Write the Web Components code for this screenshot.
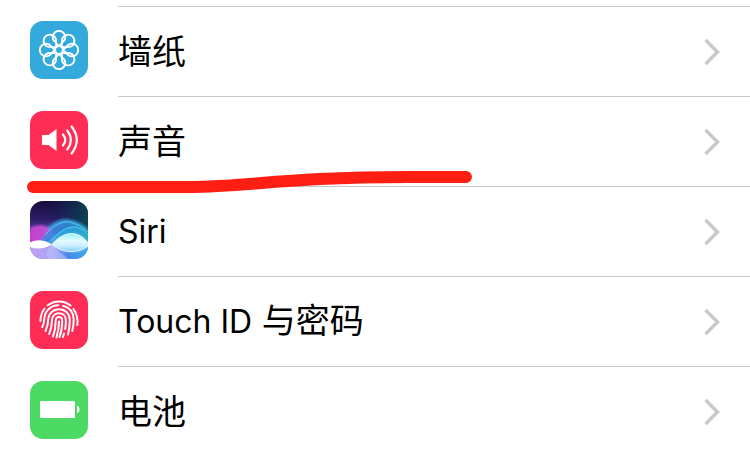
<!DOCTYPE html>
<html lang="zh-CN">
<head>
<meta charset="utf-8">
<meta name="viewport" content="width=device-width, initial-scale=1">
<title>设置</title>
<style>
    body {
        margin: 0;
        background: #fff;
        color: #000;
        font-family: Inter, "Noto Sans CJK SC", sans-serif;
    }
    /* Inter runs larger than the Chinese face at the same size */
    [lang="en"] {
        font-size: 32px;
    }
</style>
</head>
<body>
<settings-list>
    <settings-row href="#wallpaper">
        <app-icon slot="icon" name="wallpaper"></app-icon>墙纸
    </settings-row>
    <settings-row href="#sounds">
        <app-icon slot="icon" name="sounds"></app-icon>声音
    </settings-row>
    <settings-row href="#siri">
        <app-icon slot="icon" name="siri"></app-icon><span lang="en">Siri</span>
    </settings-row>
    <settings-row href="#touch-id">
        <app-icon slot="icon" name="touch"></app-icon><span lang="en">Touch ID</span> 与密码
    </settings-row>
    <settings-row href="#battery">
        <app-icon slot="icon" name="battery"></app-icon>电池
    </settings-row>
    <marker-line slot="marker"></marker-line>
</settings-list>

<script>
const petals = [0, 45, 90, 135, 180, 225, 270, 315]
    .map(a => `<path transform="rotate(${a} 29 29)" d="M29 25L23.500 19.200A6.300 6.300 0 1 1 34.500 19.200Z"/>`)
    .join('');

const icons = {
    wallpaper: `
        <rect width="58" height="58" fill="#34aadc"/>
        <g fill="none" stroke="#fff" stroke-width="1.800" stroke-linejoin="round">
            ${petals}
            <circle cx="29" cy="29" r="3.800"/>
        </g>`,
    sounds: `
        <rect width="58" height="58" fill="#ff2d55"/>
        <path fill="#fff" d="M12 24h6.500L26.500 18v22L18.500 34H12z"/>
        <g fill="none" stroke="#fff" stroke-width="2.200" stroke-linecap="round">
            <path d="M33 23.500Q37.500 29 33 34.500"/>
            <path d="M37.300 19.500Q44.500 29 37.300 38.500"/>
            <path d="M41.600 15.500Q52 29 41.600 42.500"/>
        </g>`,
    siri: `
        <defs>
            <linearGradient id="sky" x2="0" y2="1">
                <stop offset="0" stop-color="#190c3b"/>
                <stop offset=".3" stop-color="#2a1b66"/>
                <stop offset=".5" stop-color="#4a3a9c"/>
                <stop offset="1" stop-color="#7f90e6"/>
            </linearGradient>
            <linearGradient id="teal">
                <stop offset=".3" stop-color="#0a2450" stop-opacity="0"/>
                <stop offset="1" stop-color="#0a4450"/>
            </linearGradient>
            <linearGradient id="pink">
                <stop offset="0" stop-color="#d63cc8"/>
                <stop offset="1" stop-color="#a66df0"/>
            </linearGradient>
            <linearGradient id="blue" x2="1" y2=".6">
                <stop offset="0" stop-color="#6a7cf2"/>
                <stop offset=".5" stop-color="#2a8fdc"/>
                <stop offset="1" stop-color="#17a6a8"/>
            </linearGradient>
            <linearGradient id="wave" x2="0" y2="1">
                <stop offset="0" stop-color="#8ff3f8"/>
                <stop offset=".4" stop-color="#e2fbff"/>
                <stop offset=".65" stop-color="#d3f0ff"/>
                <stop offset="1" stop-color="#7fcfff"/>
            </linearGradient>
            <linearGradient id="floor">
                <stop offset="0" stop-color="#c79bf0"/>
                <stop offset=".4" stop-color="#a3a6f6"/>
                <stop offset=".65" stop-color="#4a86ea"/>
                <stop offset="1" stop-color="#35aee8"/>
            </linearGradient>
            <filter id="glow" x="-20%" y="-40%" width="140%" height="180%">
                <feGaussianBlur stdDeviation="1.800"/>
            </filter>
        </defs>
        <rect width="58" height="58" fill="url(#sky)"/>
        <rect width="58" height="40" fill="url(#teal)"/>
        <path fill="none" stroke="#e04fe0" stroke-width="3" filter="url(#glow)" d="M0 29Q12 22 22 31"/>
        <path fill="none" stroke="#38b8f0" stroke-width="3" filter="url(#glow)" d="M15 32C24 22 32 18 41 21Q50 23 58 30"/>
        <path fill="url(#pink)" opacity=".9" d="M0 30Q11 22 21 30Q28 36 33 43L0 48z"/>
        <path fill="url(#blue)" opacity=".85" d="M8 42C19 31 27 19 40 21C48 22 54 26 58 31V47H8z"/>
        <path fill="#35b5ea" opacity=".55" d="M16 43C26 31 37 25 47 26Q54 28 58 34V46H16z"/>
        <path fill="none" stroke="#5fd0f5" stroke-width=".9" d="M15 34C24 24 31 20 40 21Q50 23 58 31M21 40C30 29 39 25 47 26Q54 28 58 34"/>
        <path fill="url(#floor)" d="M0 43Q12 37 22 43T58 43V58H0z"/>
        <path fill="#c8c4ff" opacity=".5" d="M22 44C29 52 35 54 38 58H18Q14 50 22 44z"/>
        <path fill="#fff" opacity=".7" filter="url(#glow)" d="M22 43.500C34 31 50 30 58 42V45C50 52 34 53 22 43.500z"/>
        <path fill="url(#wave)" d="M22 43.500C29 35.500 36 32.500 42 32.500C49 33 54 37 58 42V45C52 49 47 50.500 41 50.500C34 50.500 28 48 22 43.500z"/>
        <path fill="#fff" d="M0 41.500Q10 36 22 43.500Q11 50 0 46z"/>
        <path fill="none" stroke="#fff" stroke-width=".8" d="M22 43.500C29 35.500 36 32.500 42 32.500C49 33 54 37 58 42M22 43.500C28 48 34 50.500 41 50.500C47 50.500 52 49 58 45"/>`,
    touch: `
        <rect width="58" height="58" fill="#ff2d55"/>
        <g fill="none" stroke="#fff" stroke-width="2" stroke-linecap="round">
            <path d="M17.500 14.500C24.500 9 34 9 40.500 14.500"/>
            <path d="M10.500 30Q10.500 23 14.500 17.500M43.500 18Q48.500 25 47.300 34"/>
            <path d="M12.300 36Q14.300 32 14.300 27.500C15 19.500 21 14.300 28.500 14.300"/>
            <path d="M33 14.700C39.500 16.500 43.700 21.500 43.700 28.500Q43.700 35 42.300 40"/>
            <path d="M15.500 40Q18.200 34 18.200 28.500C18.500 22.500 23 18.300 29 18.300C35.500 18.300 39.800 23 39.800 29Q39.800 37 38 43.500"/>
            <path d="M19.200 43Q22 36 22 29C22.200 25 25 22.200 29 22.200C33.200 22.200 35.900 25 35.900 29.500Q35.900 34 35.200 38M34 42.500L33 46"/>
            <path d="M23 45.500Q25.700 38 25.700 30C25.700 27.500 27 26 29 26C31 26 32.200 27.500 32.200 30Q32.200 39 29.500 46"/>
            <path d="M29 30.500Q29 38 26.500 46.500"/>
        </g>`,
    battery: `
        <rect width="58" height="58" fill="#4cd964"/>
        <rect x="10" y="20" width="35" height="17" rx=".8" fill="#fff"/>
        <path fill="#fff" d="M47 25c3.500 .3 3.500 6.700 0 7z"/>`
};

class AppIcon extends HTMLElement {
    constructor() {
        super();
        this.attachShadow({ mode: 'open' });
    }

    connectedCallback() {
        this.shadowRoot.innerHTML = `
            <style>
                :host {
                    display: block;
                    width: 58px;
                    height: 58px;
                    border-radius: 13px;
                    overflow: hidden;
                }
                svg {
                    display: block;
                }
            </style>
            <svg width="58" height="58" viewBox="0 0 58 58" aria-hidden="true">${icons[this.getAttribute('name')]}</svg>
        `;
    }
}

class SettingsRow extends HTMLElement {
    constructor() {
        super();
        this.attachShadow({ mode: 'open' });
    }

    connectedCallback() {
        this.shadowRoot.innerHTML = `
            <style>
                :host {
                    display: block;
                }
                a {
                    display: flex;
                    gap: 30px;
                    padding-left: 30px;
                    color: inherit;
                    text-decoration: none;
                }
                .icon {
                    padding-top: 15px;
                }
                .body {
                    flex: 1;
                    display: flex;
                    align-items: center;
                    justify-content: space-between;
                    height: 89px;
                    padding-right: 30px;
                    border-top: 1px solid #c8c7cc;
                }
                .label {
                    font-size: 34px;
                    line-height: 48px;
                }
            </style>
            <a href="${this.getAttribute('href')}">
                <div class="icon"><slot name="icon"></slot></div>
                <div class="body">
                    <span class="label"><slot></slot></span>
                    <svg width="16" height="28" viewBox="0 0 16 28" aria-hidden="true">
                        <path d="M1.500 2L13.500 14L1.500 26" fill="none" stroke="#c7c7cc" stroke-width="3.400"/>
                    </svg>
                </div>
            </a>
        `;
    }
}

// hand-drawn underline over the rows
class MarkerLine extends HTMLElement {
    constructor() {
        super();
        this.attachShadow({ mode: 'open' });
        this.shadowRoot.innerHTML = `
            <style>
                :host {
                    position: absolute;
                    top: 170px;
                    left: 27px;
                    pointer-events: none;
                }
                svg {
                    display: block;
                }
            </style>
            <svg width="446" height="24" viewBox="0 0 446 24" aria-hidden="true">
                <path d="M6 17H162C222 17 258 7 382 7H439" fill="none" stroke="#ff1f12" stroke-width="12" stroke-linecap="round"/>
            </svg>
        `;
    }
}

class SettingsList extends HTMLElement {
    constructor() {
        super();
        this.attachShadow({ mode: 'open' });
        this.shadowRoot.innerHTML = `
            <style>
                :host {
                    display: block;
                    position: relative;
                }
                nav {
                    padding-top: 6px;
                }
            </style>
            <nav aria-label="设置"><slot></slot></nav>
            <slot name="marker"></slot>
        `;
    }
}

customElements.define('app-icon', AppIcon);
customElements.define('settings-row', SettingsRow);
customElements.define('marker-line', MarkerLine);
customElements.define('settings-list', SettingsList);
</script>
</body>
</html>
